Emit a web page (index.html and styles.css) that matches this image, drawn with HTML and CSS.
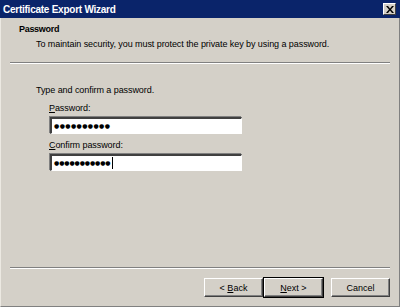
FILE: index.html
```html
<!DOCTYPE html>
<html lang="en">
  <head>
    <meta charset="UTF-8" />
    <title>Certificate Export Wizard</title>
    <link rel="stylesheet" href="styles.css">
  </head>
  <body>
    <div class="window">
      <div class="titlebar">
        <span class="caption">Certificate Export Wizard</span>
        <span class="close">
          <svg width="8" height="7" viewBox="0 0 8 7">
            <path d="M0 0h2l2 2.5 2-2.5h2l-3 3.5 3 3.5h-2l-2-2.5-2 2.5h-2l3-3.5z" fill="#000" />
          </svg>
        </span>
      </div>

      <div class="header">
        <div class="head-title">Password</div>
        <div class="head-sub">To maintain security, you must protect the private key by using a password.</div>
      </div>
      <div class="sep header-sep"></div>

      <div class="content">
        <p class="intro">Type and confirm a password.</p>
        <label class="field-label"><u>P</u>assword:</label>
        <div class="edit">●●●●●●●●●●</div>
        <label class="field-label"><u>C</u>onfirm password:</label>
        <div class="edit tight">●●●●●●●●●●●<span class="caret"></span></div>
      </div>

      <div class="sep footer-sep"></div>
      <div class="buttons">
        <button class="btn">&lt; <u>B</u>ack</button>
        <button class="btn default"><u>N</u>ext &gt;</button>
        <button class="btn cancel">Cancel</button>
      </div>
    </div>
  </body>
</html>
```

FILE: styles.css
```css
* {
  padding: 0;
  margin: 0;
  box-sizing: border-box;
}

body {
  background-color: #d4d0c8;
  font-family: "Liberation Sans", Arial, sans-serif;
  font-size: 9px;
  letter-spacing: -0.07px;
  color: #000;
}

.window {
  width: 400px;
  height: 307px;
  display: flex;
  flex-direction: column;
  background-color: #d4d0c8;
  border-left: 1px solid #ece9e2;
  border-bottom: 1px solid #808080;
  border-right: 1px solid #808080;
  white-space: nowrap;
}

/* title bar */

.titlebar {
  height: 18px;
  background-color: #0a246a;
  display: flex;
  align-items: center;
  justify-content: space-between;
  padding: 0 4px 0 3px;
  margin-left: -1px;
  margin-right: -1px;
}

.caption {
  color: #fff;
  font-weight: bold;
  font-size: 10px;
  letter-spacing: -0.25px;
}

.close {
  width: 13px;
  height: 12px;
  background-color: #d4d0c8;
  border-top: 1px solid #fff;
  border-left: 1px solid #fff;
  border-right: 1px solid #404040;
  border-bottom: 1px solid #404040;
  display: flex;
  align-items: center;
  justify-content: center;
}

/* header */

.header {
  padding: 5px 0 0 18px;
  line-height: 13px;
}

.head-title {
  font-weight: bold;
  letter-spacing: -0.3px;
}

.head-sub {
  margin-top: 2px;
  padding-left: 17px;
}

.sep {
  height: 2px;
  border-top: 1px solid #808080;
  border-bottom: 1px solid #fff;
  margin: 0 9px;
}

.header-sep {
  margin-top: 11px;
}

/* content */

.content {
  flex: 1;
  padding: 20px 0 0 35px;
  line-height: 13px;
}

.intro {
  margin-bottom: 5px;
}

.field-label {
  display: block;
  margin-left: 13px;
}

.edit {
  margin: 2px 0 5px 14px;
  width: 192px;
  height: 17px;
  background-color: #fff;
  border-top: 2px solid #404040;
  border-left: 2px solid #404040;
  border-right: 1px solid #fff;
  border-bottom: 1px solid #fff;
  box-shadow: -1px -1px 0 #808080, 1px 1px 0 #d4d0c8;
  font-family: "DejaVu Sans", sans-serif;
  font-size: 6px;
  letter-spacing: 0.4px;
  line-height: 14px;
  padding-left: 2px;
  display: flex;
  align-items: center;
}

.tight {
  letter-spacing: -0.1px;
}

.caret {
  display: inline-block;
  width: 1px;
  height: 12px;
  margin-left: 1px;
  background-color: #000;
}

/* knapper */

.footer-sep {
  margin-bottom: 9px;
}

.buttons {
  display: flex;
  justify-content: flex-end;
  padding: 0 9px 9px 0;
}

.btn {
  width: 59px;
  height: 19px;
  font-family: "Liberation Sans", Arial, sans-serif;
  font-size: 9px;
  background-color: #d4d0c8;
  border-top: 1px solid #fff;
  border-left: 1px solid #fff;
  border-right: 1px solid #404040;
  border-bottom: 1px solid #404040;
  box-shadow: inset -1px -1px 0 #808080;
}

.default {
  outline: 1px solid #000;
  margin-left: 1px;
}

.cancel {
  margin-left: 8px;
}
```
